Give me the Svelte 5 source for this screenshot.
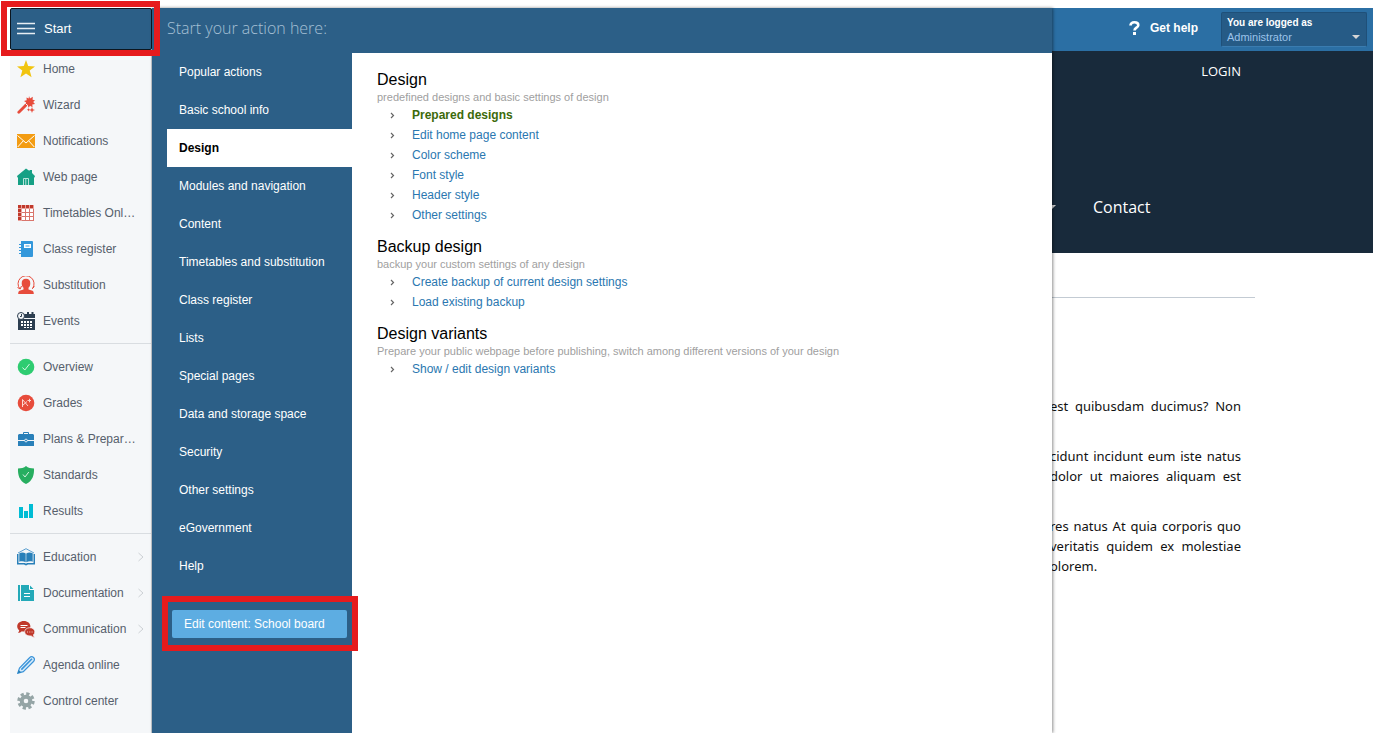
<script>
  const groups = [
    [
      { label: 'Home', icon: 'star' },
      { label: 'Wizard', icon: 'wand' },
      { label: 'Notifications', icon: 'mail' },
      { label: 'Web page', icon: 'house' },
      { label: 'Timetables Onl…', icon: 'timetable' },
      { label: 'Class register', icon: 'register' },
      { label: 'Substitution', icon: 'person' },
      { label: 'Events', icon: 'events' }
    ],
    [
      { label: 'Overview', icon: 'check' },
      { label: 'Grades', icon: 'grades' },
      { label: 'Plans & Prepar…', icon: 'briefcase' },
      { label: 'Standards', icon: 'shield' },
      { label: 'Results', icon: 'bars' }
    ],
    [
      { label: 'Education', icon: 'education', more: true },
      { label: 'Documentation', icon: 'docs', more: true },
      { label: 'Communication', icon: 'chat', more: true },
      { label: 'Agenda online', icon: 'pencil' },
      { label: 'Control center', icon: 'gear' }
    ]
  ];

  const categories = [
    'Popular actions',
    'Basic school info',
    'Design',
    'Modules and navigation',
    'Content',
    'Timetables and substitution',
    'Class register',
    'Lists',
    'Special pages',
    'Data and storage space',
    'Security',
    'Other settings',
    'eGovernment',
    'Help'
  ];

  const sections = [
    {
      title: 'Design',
      info: 'predefined designs and basic settings of design',
      links: ['Prepared designs', 'Edit home page content', 'Color scheme', 'Font style', 'Header style', 'Other settings']
    },
    {
      title: 'Backup design',
      info: 'backup your custom settings of any design',
      links: ['Create backup of current design settings', 'Load existing backup']
    },
    {
      title: 'Design variants',
      info: 'Prepare your public webpage before publishing, switch among different versions of your design',
      links: ['Show / edit design variants']
    }
  ];

  const paragraphs = [
    ['est quibusdam ducimus? Non'],
    ['cidunt incidunt eum iste natus', 'dolor ut maiores aliquam est'],
    ['res natus At quia corporis quo', 'veritatis quidem ex molestiae', 'olorem.']
  ];

  let active = $state('Design');
  let query = $state('');
</script>

{#snippet icon(name)}
  <svg class="icon" viewBox="0 0 18 18" aria-hidden="true">
    {#if name === 'star'}
      <path fill="#f1c40f" d="M9 0l2.2 6.1 6.8.3-5.3 4.2 1.9 6.6L9 13.4l-5.6 3.8 1.900-6.600L0 6.400l6.800-.3z" />
    {:else if name === 'wand'}
      <path stroke="#e74c3c" stroke-width="2.800" stroke-linecap="round" d="M1.800 16.300l7-7" />
      <path fill="#e74c3c" d="M12 0l1 2.400L15.800.8l-.2 2.900 2.400.5-1.800 1.800 1.800 2-2.700.4.2 2.800-2.500-1.500-1.400 2-1-2.900-3 .3 1.600-2.500-2.200-1.600 2.700-.8-.200-2.700 2.200 1z" />
      <path fill="#e74c3c" d="M15 11l.8 2.200 2.200.8-2.200.8-.8 2.200-.8-2.200-2.200-.8 2.200-.8zM11.500 12l.5 1.200 1.200.5-1.200.5-.5 1.200-.5-1.200-1.200-.5 1.200-.5z" />
      <path stroke="#f5f7f9" d="M8.400 7.400l2.200 2.200" />
    {:else if name === 'mail'}
      <path fill="#f39c12" d="M0 2h18v14H0z" />
      <path fill="none" stroke="#fff" d="M.5 3.500L9 11l8.500-7.500M.7 15l5.600-6.200M17.300 15l-5.600-6.200" />
    {:else if name === 'house'}
      <path fill="#16a085" d="M9 .5l3.500 2.600V2H15v3l3 3-.5 1.500H17V17H1V9.500H.5L0 8z" />
      <path fill="none" stroke="#b9e3da" d="M6.500 17v-6.500h5V17M8.800 10.500V17" />
    {:else if name === 'timetable'}
      <path fill="#fff" d="M1 1h16v16H1z" />
      <path fill="none" stroke="#d9756c" d="M8.500 4v13M12.500 4v13M16.500 4v13M4 8.500h13M4 12.500h13M4 16.500h13" />
      <path fill="#e8a29c" d="M1 1h16v4H5v12H1z" />
      <path stroke="#c0392b" stroke-width="3" stroke-dasharray="3 1" d="M1 2.500h16M2.500 1v16" />
    {:else if name === 'register'}
      <path fill="#3498db" d="M4 1h11a1 1 0 0 1 1 1v14a1 1 0 0 1-1 1H4z" />
      <path fill="#fff" d="M7 4h7v4H7z" />
      <path stroke="#3498db" d="M8.500 6h4M2 4.500h2.500M2 7.500h2.500M2 10.500h2.500M2 13.500h2.500" />
    {:else if name === 'person'}
      <path fill="#e74c3c" d="M9 2.800c3 0 4.300 1.800 4.300 4.400 0 2-.7 3.700-1.800 4.600v1.700l4 1.300c1 .5 1.300 1.700 1.300 3.200H1.200c0-1.500.3-2.700 1.300-3.200l4-1.300v-1.700c-1.100-.9-1.800-2.600-1.800-4.600 0-2.600 1.300-4.400 4.300-4.400z" />
      <path fill="none" stroke="#e74c3c" d="M3 13A8 8 0 1 1 15.500 12.500M.5 11.500L3.200 13l1.300-3M17.500 10.500l-2.200 2.200" />
    {:else if name === 'events'}
      <path fill="#2c3e50" d="M7 2h11v4H7zM1 7h17v11H1z" />
      <path stroke="#2c3e50" stroke-width="2" d="M11 0v3M15.500 0v3" />
      <path fill="#fff" d="M4 9h2v2H4zM7 9h2v2H7zM10 9h2v2h-2zM13 9h2v2h-2zM4 12h2v2H4zM7 12h2v2H7zM10 12h2v2h-2zM13 12h2v2h-2zM7 15h2v1H7zM10 15h2v1h-2zM13 15h2v1h-2z" />
      <circle cx="4" cy="4" r="3.500" fill="#f5f7f9" stroke="#2c3e50" />
      <path fill="none" stroke="#2c3e50" d="M4.500 2v2.500H3" />
    {:else if name === 'check'}
      <circle cx="9" cy="9" r="8.300" fill="#2ecc71" />
      <path fill="none" stroke="#d9f8e5" d="M5.500 9.500l2.300 2.500 4.700-6" />
    {:else if name === 'grades'}
      <circle cx="9" cy="9" r="8.300" fill="#e74c3c" />
      <path fill="none" stroke="#fbd7d3" d="M5.500 13V5.500l5.500 6.500M5 12l5-4.500M10.500 6.500h3.500M12.500 4.800v3.500" />
    {:else if name === 'briefcase'}
      <path fill="none" stroke="#2980b9" d="M6.500 4V2.500h5V4" />
      <path fill="#2980b9" d="M2 4h14l1 1v5H1V5zM1 11h16v5H1z" />
      <circle cx="9" cy="10.500" r="1.400" fill="#2980b9" stroke="#fff" stroke-width=".8" />
    {:else if name === 'shield'}
      <path fill="#27ae60" d="M9 0c2 1.800 5 2.500 8 2.500.3 6-1.200 12.500-8 15.500C2.200 15 .7 8.500 1 2.500 4 2.500 7 1.800 9 0z" />
      <path fill="none" stroke="#d4f0df" d="M6 8.500l2 2.500 3.800-5" />
    {:else if name === 'bars'}
      <path fill="#00bcd4" d="M2 5h4v11H2zM7 9h4v7H7zM12 2h4v14h-4z" />
    {:else if name === 'education'}
      <path fill="none" stroke="#5b9fd0" d="M1 5L9 .7 17 5" />
      <path fill="#2980b9" d="M0 6h1.500v9H8l1 .7 1-.7h6.500V6H18v10.500h-7l-2 1-2-1H0z" />
      <path fill="#2980b9" d="M2.300 5.200C4.500 4.200 7 4.400 8.700 5.500v8.700c-2-1-4.400-1.100-6.400-.4zM15.700 5.200c-2.200-1-4.700-.8-6.400.3v8.700c2-1 4.400-1.100 6.400-.4z" />
    {:else if name === 'docs'}
      <path fill="#23a9b8" d="M1 1h2v16H1zM4 1h8.500L17 5.500V17H4z" />
      <path stroke="#fff" d="M7 9.500h6M7 12.500h6M12.500 1v4.500H17" fill="none" />
    {:else if name === 'chat'}
      <path fill="#c0392b" d="M6.800 1c3.800 0 6.600 2.300 6.600 5.200s-2.800 5.300-6.600 5.300c-.8 0-1.400-.1-2-.2-1 1-2.300 1.500-3.800 1.500.8-.8 1.200-1.600 1.200-2.500C.9 9.300.2 7.900.2 6.200.2 3.300 3 1 6.800 1z" />
      <path fill="#c0392b" stroke="#f5f7f9" stroke-width=".7" d="M12.800 7.700c2.900 0 5 1.800 5 4.100 0 1.300-.5 2.300-1.400 3 0 1 .4 1.700 1.200 2.600-1.400-.1-2.500-.6-3.400-1.500-3.600.4-6.500-1.400-6.500-4.100 0-2.300 2.200-4.100 5.100-4.100z" />
      <path stroke="#fff" d="M3.500 5.500h7M3.500 7.500h5" />
      <path stroke="#f2c7c2" d="M10 12h1M12.300 12h1M14.600 12h1" />
    {:else if name === 'pencil'}
      <path fill="#d9ecfa" stroke="#3b94d9" stroke-width="1.200" d="M.8 17.200L2.500 12 12.300 2c1.300-1.300 3-1.600 4.200-.5s1.200 2.600 0 4L6.300 15.600z" />
      <path stroke="#3b94d9" stroke-width="1.600" d="M4.300 13.600L15 2.800" />
      <path fill="#2980b9" d="M.5 17.500l1.200-3.600 2.500 2.400z" />
    {:else if name === 'gear'}
      <circle cx="9" cy="9" r="4.300" fill="none" stroke="#95a5a6" stroke-width="4" />
      <circle cx="9" cy="9" r="7.200" fill="none" stroke="#95a5a6" stroke-width="3" stroke-dasharray="3.200 2.455" />
    {/if}
  </svg>
{/snippet}

<div class="app">
  <aside class="sidebar">
    <div class="start-wrap">
      <button class="start">
        <svg viewBox="0 0 18 14" aria-hidden="true"><path stroke="#e8eef3" stroke-width="1.400" d="M0 1.500h18M0 6.500h18M0 11.500h18" /></svg>
        Start
      </button>
      <span class="marker"></span>
    </div>
    <nav>
      {#each groups as group}
        <ul>
          {#each group as item}
            <li>
              <a href="#{item.icon}">
                {@render icon(item.icon)}
                <span>{item.label}</span>
                {#if item.more}
                  <svg class="more" viewBox="0 0 6 10" aria-hidden="true"><path fill="none" stroke="#ccd0d4" d="M.5 1l4.500 4-4.500 4" /></svg>
                {/if}
              </a>
            </li>
          {/each}
        </ul>
      {/each}
    </nav>
  </aside>

  <div class="actions">
    <input class="search" type="text" aria-label="Start your action here" placeholder="Start your action here:" bind:value={query} />
    <div class="categories">
      {#each categories as category}
        <button class="category" class:active={active === category} onclick={() => (active = category)}>{category}</button>
      {/each}
      <div class="edit-wrap">
        <button class="edit">Edit content: School board</button>
        <span class="marker"></span>
      </div>
    </div>
    <div class="panel">
      {#each sections as section}
        <section>
          <h2>{section.title}</h2>
          <p>{section.info}</p>
          <ul>
            {#each section.links as link}
              <li>
                <svg viewBox="0 0 5 7" aria-hidden="true"><path fill="none" stroke="#666" stroke-width="1.200" d="M1 1l2.500 2.500L1 6" /></svg>
                <a href="#design" class:current={link === 'Prepared designs'}>{link}</a>
              </li>
            {/each}
          </ul>
        </section>
      {/each}
    </div>
  </div>

  <div class="site">
    <div class="topbar">
      <a class="help" href="#help">
        <svg viewBox="0 0 11 14" aria-hidden="true">
          <path fill="none" stroke="#fff" stroke-width="2.600" d="M1.500 4.500C1.500 2.500 3 1.300 5.300 1.300S9.300 2.400 9.300 4.200c0 2.600-3.800 2.400-3.800 5.300" />
          <path fill="#fff" d="M4 11h3v3H4z" />
        </svg>
        Get help
      </a>
      <button class="account">
        <strong>You are logged as</strong>
        <span>Administrator <i class="caret"></i></span>
      </button>
    </div>
    <header>
      <a class="login" href="#login">LOGIN</a>
      <nav class="site-nav">
        <i class="caret"></i>
        <a href="#contact">Contact</a>
      </nav>
    </header>
    <main>
      <hr />
      {#each paragraphs as lines}
        <p>
          {#each lines as line}
            <span class:short={line === 'olorem.'}>{line}</span>
          {/each}
        </p>
      {/each}
    </main>
  </div>
</div>

<style>
  :global(body) {
    margin: 0;
    background: #fff;
  }

  .app {
    display: grid;
    grid-template-columns: 142px minmax(0, 900px) minmax(321px, 1fr);
    min-height: 100vh;
    box-sizing: border-box;
    padding: 8px 0 0 10px;
    overflow: hidden;
    font: 12px/16px "Liberation Sans", Arial, sans-serif;
  }

  ul {
    margin: 0;
    padding: 0;
    list-style: none;
  }

  a {
    text-decoration: none;
  }

  button {
    border: 0;
    font: inherit;
    cursor: pointer;
  }

  .marker {
    position: absolute;
    z-index: 5;
    border: 6px solid #e61b1d;
    pointer-events: none;
  }

  /* Main navigation */
  .sidebar {
    background: #f5f7f9;
    border-right: 1px solid #c8ccd0;
    box-sizing: border-box;
  }

  .start-wrap {
    position: relative;
    margin: 0 -1px 1px 0;
  }

  .start-wrap .marker {
    inset: -7px -8px -6px -9px;
  }

  .start {
    display: flex;
    align-items: center;
    gap: 9px;
    width: 100%;
    height: 42px;
    padding: 0 6px;
    border: 1px solid #0b1620;
    border-radius: 2px;
    background: #2c5f87;
    color: #fff;
    font-size: 13px;
  }

  .start svg {
    width: 18px;
    height: 14px;
  }

  .sidebar ul + ul {
    margin-top: 4px;
    padding-top: 5px;
    border-top: 1px solid #d9dde1;
  }

  .sidebar a {
    display: flex;
    align-items: center;
    gap: 8px;
    height: 36px;
    padding: 0 7px;
    color: #56606c;
    white-space: nowrap;
  }

  .icon {
    flex: none;
    width: 18px;
    height: 18px;
  }

  .more {
    width: 6px;
    height: 10px;
    margin-left: auto;
  }

  /* Action menu */
  .actions {
    position: relative;
    z-index: 2;
    display: grid;
    grid-template: 45px 1fr / 200px minmax(0, 1fr);
    background: #fff;
    box-shadow: 1px 0 3px rgba(0, 0, 0, 0.45);
  }

  .search {
    grid-column: 1 / 3;
    padding: 0 15px 5px;
    border: 0;
    background: #2c5f87;
    color: #fff;
    font: 300 16px "Open Sans", sans-serif;
    outline: none;
  }

  .search::placeholder {
    color: #a6c0d5;
    opacity: 1;
  }

  .categories {
    display: flex;
    flex-direction: column;
    padding-left: 15px;
    background: #2c5f87;
  }

  .category {
    height: 38px;
    padding: 0 12px;
    background: none;
    color: #fff;
    text-align: left;
  }

  .category.active {
    background: #fff;
    color: #000;
    font-weight: bold;
  }

  .edit-wrap {
    position: relative;
    margin: 25px 5px;
  }

  .edit-wrap .marker {
    inset: -14px -11px -13px -10px;
  }

  .edit {
    width: 100%;
    height: 28px;
    padding: 0 12px;
    border-radius: 2px;
    background: #5dade2;
    color: #fff;
    text-align: left;
  }

  .panel {
    padding: 16px 25px;
  }

  section {
    margin-bottom: 11px;
  }

  h2 {
    margin: 0;
    font-size: 16px;
    font-weight: normal;
    line-height: 22px;
  }

  section p {
    margin: 0;
    color: #a0a0a0;
    font-size: 11px;
    line-height: 12px;
    padding-bottom: 2px;
  }

  section li {
    display: flex;
    align-items: center;
    gap: 17px;
    height: 20px;
    padding-left: 13px;
  }

  section li svg {
    width: 5px;
    height: 7px;
  }

  section a {
    color: #2a77b0;
  }

  section a.current {
    color: #3c6a0b;
    font-weight: bold;
  }

  /* Public page */
  .topbar {
    display: flex;
    justify-content: flex-end;
    gap: 23px;
    height: 39px;
    padding: 4px 6px 0 0;
    background: #2b6fa4;
  }

  .help {
    display: flex;
    align-items: center;
    gap: 10px;
    height: 32px;
    color: #fff;
    font-weight: bold;
  }

  .help svg {
    width: 11px;
    height: 14px;
  }

  .account {
    width: 146px;
    height: 35px;
    padding: 0 6px 0 5px;
    border: 1px solid #1f5079;
    border-bottom-color: #3a7cb0;
    border-radius: 2px;
    background: #265b86;
    color: #fff;
    text-align: left;
  }

  .account strong {
    display: block;
    font-size: 10px;
    line-height: 14px;
  }

  .account span {
    display: flex;
    justify-content: space-between;
    align-items: center;
    color: #9cc3ea;
    font-size: 11px;
    line-height: 14px;
  }

  .caret {
    border: 4px solid transparent;
    border-top-color: #d5d5d5;
    border-bottom: 0;
  }

  header {
    display: flex;
    flex-direction: column;
    justify-content: space-between;
    box-sizing: border-box;
    height: 202px;
    padding: 12px 132px 34px 0;
    background: #182a3b;
    font-family: "Open Sans", sans-serif;
  }

  header a {
    color: #fff;
  }

  .login {
    align-self: flex-end;
    font-size: 13px;
  }

  .site-nav {
    display: flex;
    align-items: center;
    gap: 37px;
    margin-left: -4px;
    font-size: 16px;
    line-height: 24px;
  }

  main {
    padding-right: 132px;
    color: #111;
    font: 13px/20px "Noto Sans", sans-serif;
  }

  hr {
    margin: 44px -14px 98px 0;
    border: 0;
    border-top: 1px solid #c3cbd3;
  }

  main p {
    margin: 0 0 30px -2px;
  }

  main span {
    display: block;
    text-align-last: justify;
    white-space: nowrap;
  }

  main span.short {
    text-align-last: left;
  }
</style>
